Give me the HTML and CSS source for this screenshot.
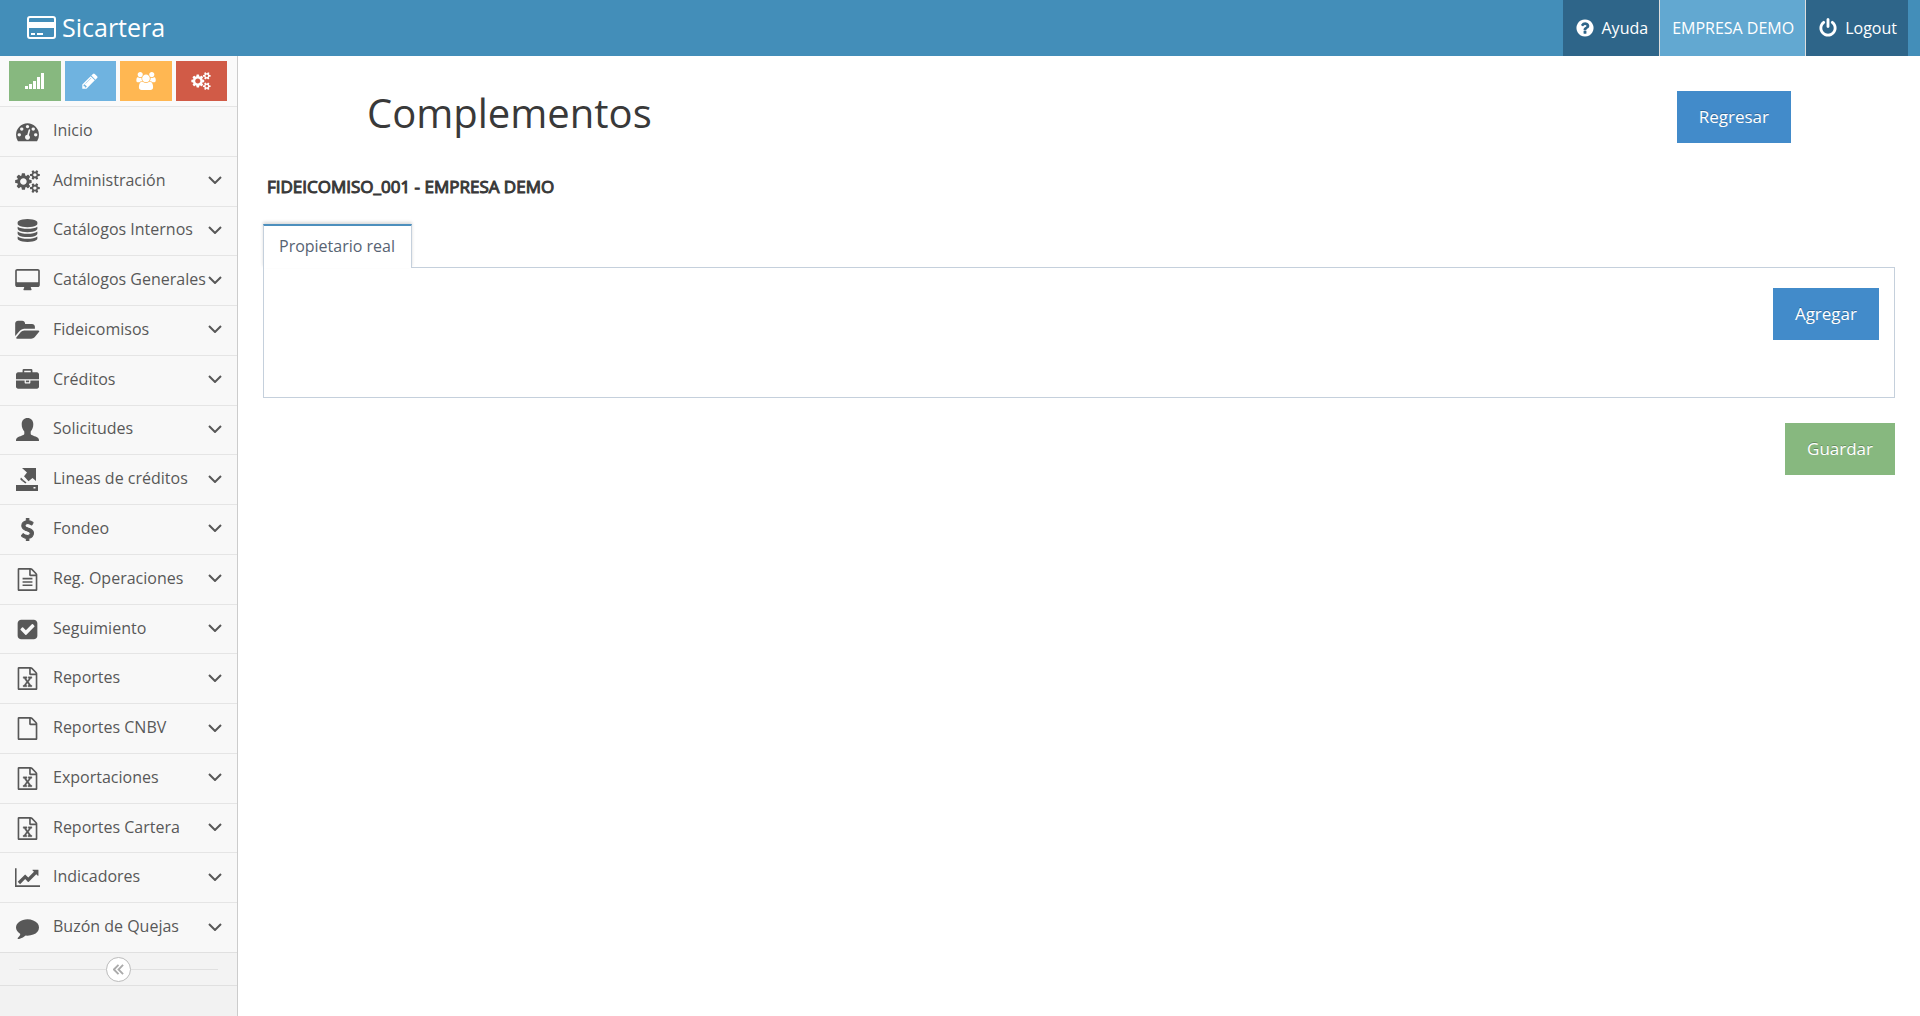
FILE: index.html
```html
<!DOCTYPE html>
<html lang="es">
<head>
<meta charset="utf-8">
<title>Sicartera - Complementos</title>
<link rel="stylesheet" href="styles.css">
</head>
<body>
<svg class="sprite" aria-hidden="true">
  <symbol id="tachometer" viewBox="-64 0 1920 1792"><path transform="translate(0 128)" d="M384 1024q0-53-37.500-90.500t-90.500-37.500-90.500 37.500-37.500 90.500 37.500 90.500 90.500 37.500 90.500-37.500 37.500-90.500zm192-448q0-53-37.500-90.500t-90.500-37.500-90.500 37.500-37.500 90.500 37.500 90.500 90.500 37.500 90.500-37.500 37.500-90.500zm428 481l101-382q6-26-7.500-48.500t-38.500-29.500-48 6.500-30 39.500l-101 382q-60 5-107 43.500t-63 98.500q-20 77 20 146t117 89 146-20 89-117q16-60-6-117t-72-91zm660-33q0-53-37.500-90.500t-90.500-37.500-90.500 37.500-37.500 90.500 37.500 90.500 90.500 37.500 90.500-37.500 37.500-90.500zm-640-640q0-53-37.500-90.500t-90.500-37.500-90.500 37.500-37.500 90.500 37.500 90.500 90.500 37.500 90.500-37.500 37.500-90.500zm448 192q0-53-37.500-90.500t-90.500-37.500-90.500 37.500-37.500 90.500 37.500 90.500 90.500 37.500 90.500-37.500 37.500-90.500zm320 448q0 261-141 483-19 29-54 29h-1402q-35 0-54-29-141-221-141-483 0-182 71-348t191-286 286-191 348-71 348 71 286 191 191 286 71 348z"/></symbol>
  <symbol id="cogs" viewBox="-64 0 1920 1792"><path d="M832 896q0-106-75-181t-181-75-181 75-75 181 75 181 181 75 181-75 75-181zm768 512q0-52-38-90t-90-38-90 38-38 90q0 53 37.500 90.500t90.500 37.500 90.500-37.500 37.500-90.500zm0-1024q0-52-38-90t-90-38-90 38-38 90q0 53 37.500 90.500t90.500 37.500 90.500-37.500 37.500-90.500zm-384 421v185q0 10-7 19.500t-16 10.500l-155 24q-11 35-32 76 34 48 90 115 7 11 7 20 0 12-7 19-23 30-82.500 89.500t-78.500 59.500q-11 0-21-7l-115-90q-37 19-77 31-11 108-23 155-7 24-30 24h-186q-11 0-20-7.500t-10-17.500l-23-153q-34-10-75-31l-118 89q-7 7-20 7-11 0-21-8-144-133-144-160 0-9 7-19 10-14 41-53t47-61q-23-44-35-82l-152-24q-10-1-17-9.500t-7-19.500v-185q0-10 7-19.500t16-10.500l155-24q11-35 32-76-34-48-90-115-7-11-7-20 0-12 7-20 22-30 82-89t79-59q11 0 21 7l115 90q34-18 77-32 11-108 23-154 7-24 30-24h186q11 0 20 7.500t10 17.500l23 153q34 10 75 31l118-89q8-7 20-7 11 0 21 8 144 133 144 160 0 8-7 19-12 16-42 54t-45 60q23 48 34 82l152 23q10 2 17 10.500t7 19.500zm640 533v140q0 16-149 31-12 27-30 52 51 113 51 138 0 4-4 7-122 71-124 71-8 0-46-47t-52-68q-20 2-30 2t-30-2q-14 21-52 68t-46 47q-2 0-124-71-4-3-4-7 0-25 51-138-18-25-30-52-149-15-149-31v-140q0-16 149-31 13-29 30-52-51-113-51-138 0-4 4-7 4-2 35-20t59-34 30-16q8 0 46 46.500t52 67.500q20-2 30-2t30 2q51-71 92-112l6-2q4 0 124 70 4 3 4 7 0 25-51 138 17 23 30 52 149 15 149 31zm0-1024v140q0 16-149 31-12 27-30 52 51 113 51 138 0 4-4 7-122 71-124 71-8 0-46-47t-52-68q-20 2-30 2t-30-2q-14 21-52 68t-46 47q-2 0-124-71-4-3-4-7 0-25 51-138-18-25-30-52-149-15-149-31v-140q0-16 149-31 13-29 30-52-51-113-51-138 0-4 4-7 4-2 35-20t59-34 30-16q8 0 46 46.500t52 67.500q20-2 30-2t30 2q51-71 92-112l6-2q4 0 124 70 4 3 4 7 0 25-51 138 17 23 30 52 149 15 149 31z"/></symbol>
  <symbol id="database" viewBox="-64 0 1920 1792"><path d="M896 768q237 0 443-43t325-127v170q0 69-103 128t-280 93.500-385 34.500-385-34.500-280-93.500-103-128v-170q119 84 325 127t443 43zm0 768q237 0 443-43t325-127v170q0 69-103 128t-280 93.500-385 34.500-385-34.500-280-93.500-103-128v-170q119 84 325 127t443 43zm0-384q237 0 443-43t325-127v170q0 69-103 128t-280 93.500-385 34.500-385-34.500-280-93.500-103-128v-170q119 84 325 127t443 43zm0-1152q208 0 385 34.500t280 93.500 103 128v128q0 69-103 128t-280 93.500-385 34.500-385-34.500-280-93.500-103-128v-128q0-69 103-128t280-93.500 385-34.500z"/></symbol>
  <symbol id="desktop" viewBox="-64 0 1920 1792"><path d="M1728 992v-832q0-13-9.500-22.500t-22.500-9.500h-1600q-13 0-22.500 9.500t-9.500 22.500v832q0 13 9.500 22.500t22.500 9.500h1600q13 0 22.500-9.500t9.500-22.500zm128-832v1088q0 66-47 113t-113 47h-544q0 37 16 77.500t32 71 16 43.500q0 26-19 45t-45 19h-512q-26 0-45-19t-19-45q0-14 16-44t32-70 16-78h-544q-66 0-113-47t-47-113v-1088q0-66 47-113t113-47h1600q66 0 113 47t47 113z"/></symbol>
  <symbol id="folder" viewBox="-64 0 1920 1792"><path d="M1815 952q0 31-31 66l-336 396q-43 51-120.500 86.500t-143.500 35.500h-1088q-34 0-60.500-13t-26.500-43q0-31 31-66l336-396q43-51 120.500-86.500t143.500-35.500h1088q34 0 60.500 13t26.500 43zm-343-344v160h-832q-94 0-197 47.500t-164 119.500l-337 396-5 6q0-4-.5-12.500t-.5-12.500v-960q0-92 66-158t158-66h320q92 0 158 66t66 158v32h544q92 0 158 66t66 158z"/></symbol>
  <symbol id="briefcase" viewBox="-64 0 1920 1792"><path d="M640 256h512v-128h-512v128zm1152 640v480q0 66-47 113t-113 47h-1472q-66 0-113-47t-47-113v-480h672v160q0 26 19 45t45 19h320q26 0 45-19t19-45v-160h672zm-768 0v128h-256v-128h256zm768-480v384h-1792v-384q0-66 47-113t113-47h352v-160q0-40 28-68t68-28h576q40 0 68 28t28 68v160h352q66 0 113 47t47 113z"/></symbol>
  <symbol id="person" viewBox="0 0 25 23"><path d="M12.500 0C9 0 6.700 2.500 6.700 6.200c0 3 1 5.500 2.600 7.300v2.400C9 17.200 4.500 18.100 2.500 19.400 1.200 20.200 1 21.500 1 23h23c0-1.500-.2-2.800-1.500-3.600-2-1.300-6.500-2.200-6.800-3.500v-2.400c1.600-1.800 2.600-4.300 2.600-7.300C18.300 2.500 16 0 12.500 0z"/></symbol>
  <symbol id="export" viewBox="0 0 25 23"><path d="M7 0h14v13l-3.500-3-4 3.300-4.500-5L12 4.500zM6 9.500l2.500 2.500-1 1.500-2.300-2.300zM8.500 12l3 2.500-1.200 1-3-2.500zM1 17h22v6H1zm17.500 2v1.500h2V19z" fill-rule="evenodd"/></symbol>
  <symbol id="dollar" viewBox="-64 0 1920 1792"><path stroke="currentColor" stroke-width="80" d="M1362 1185q0 153-99.500 263.500t-258.500 136.500v175q0 14-9 23t-23 9h-135q-13 0-22.500-9.500t-9.500-22.500v-175q-66-9-127.500-31t-101.500-44.500-74-48-46.500-37.500-17.500-18q-17-21-2-41l103-135q7-10 23-12 15-2 24 9l2 2q113 99 243 125 37 8 74 8 81 0 142.500-43t61.500-122q0-28-15-53t-33.500-42-58.500-37.500-66-32-80-32.500q-39-16-61.500-25t-61.500-26.500-62.500-31-56.500-35.500-53.500-42.500-43.500-49-35.500-58-21-66.500-8.500-78q0-138 98-242t255-134v-180q0-13 9.500-22.500t22.500-9.500h135q14 0 23 9t9 23v176q57 6 110.500 23t87 33.500 63.500 37.500 39 29 15 14q17 18 5 38l-81 146q-8 15-23 16-14 3-27-7-3-3-14.500-12t-39-26.500-58.500-32-74.500-26-85.500-11.500q-95 0-155 43t-60 111q0 26 8.500 48t29.500 41.500 39.500 33 56 31 60.500 27 70 27.500q53 20 81 31.500t76 35 75.500 42.500 62 50 53 63.500 31.500 76.500 13 94z"/></symbol>
  <symbol id="file" viewBox="-64 0 1920 1792"><path d="M1596 380q28 28 48 76t20 88v1152q0 40-28 68t-68 28h-1344q-40 0-68-28t-28-68v-1600q0-40 28-68t68-28h896q40 0 88 20t76 48zm-444-244v376h376q-10-29-22-41l-313-313q-12-12-41-22zm384 1528v-1024h-416q-40 0-68-28t-28-68v-416h-768v1536h1280z"/></symbol>
  <symbol id="file-text" viewBox="-64 0 1920 1792"><use href="#file" x="-64" width="1920" height="1792"/><path d="M512 768h768v128H512zM512 1024h768v128H512zM512 1280h768v128H512z"/></symbol>
  <symbol id="file-excel" viewBox="-64 0 1920 1792"><use href="#file" x="-64" width="1920" height="1792"/><path stroke="currentColor" stroke-width="30" d="M557 1430v106h281v-106h-75l103-161q5-7 10-16.500t7.500-13.500 3.500-4h2q1 4 5 10 2 4 4.500 7.500t6 8 6.500 8.500l107 161h-76v106h291v-106h-68l-192-273 195-282h67v-107h-279v107h74l-103 159q-4 7-10 16.500t-9 13.500l-2 3h-2q-1-4-5-10-6-11-17-23l-106-159h76v-107h-290v107h68l189 272-194 283h-68z"/></symbol>
  <symbol id="check" viewBox="-64 0 1920 1792"><path d="M813 1299l614-614q19-19 19-45t-19-45l-102-102q-19-19-45-19t-45 19l-467 467-211-211q-19-19-45-19t-45 19l-102 102q-19 19-19 45t19 45l358 358q19 19 45 19t45-19zm851-883v960q0 119-84.500 203.500t-203.500 84.500h-960q-119 0-203.500-84.500t-84.500-203.500v-960q0-119 84.500-203.500t203.500-84.500h960q119 0 203.500 84.500t84.500 203.500z"/></symbol>
  <symbol id="chart" viewBox="0 0 2048 1792"><path d="M2048 1536v128h-2048v-1536h128v1408h1920zm-128-1248v435q0 21-19.500 29.500t-35.500-7.500l-121-121-633 633q-10 10-23 10t-23-10l-233-233-416 416-192-192 585-585q10-10 23-10t23 10l233 233 464-464-121-121q-16-16-7.500-35.500t29.500-19.500h435q14 0 23 9t9 23z"/></symbol>
  <symbol id="comment" viewBox="-64 0 1920 1792"><path d="M1792 896q0 174-120 321.500t-326 233-450 85.500q-70 0-145-8-198 175-460 242-49 14-114 22-17 2-30.500-9t-17.500-29v-1q-3-4-.5-12t2-10 4.500-9.500l6-9 7-8.500 8-9q7-8 31-34.500t34.500-38 31-39.500 32.500-51 27-59 26-76q-157-89-247.500-220t-90.500-281q0-130 71-248.500t191-204.500 286-136.500 348-50.500q244 0 450 85.500t326 233 120 321.500z"/></symbol>
  <symbol id="power" viewBox="0 0 1792 1792"><path d="M1664 896q0 156-61 298t-164 245-245 164-298 61-298-61-245-164-164-245-61-298q0-182 80.500-343t226.500-270q43-32 95.500-25t83.500 50q32 42 24.500 94.500t-49.500 84.500q-98 74-151.500 181t-53.500 228q0 104 40.500 198.500t109.500 163.500 163.500 109.500 198.500 40.500 198.500-40.500 163.500-109.500 109.500-163.500 40.500-198.500q0-121-53.500-228t-151.500-181q-42-32-49.500-84.500t24.500-94.500q31-43 84-50t95 25q146 109 226.500 270t80.500 343zm-640-768v640q0 52-38 90t-90 38-90-38-38-90v-640q0-52 38-90t90-38 90 38 38 90z"/></symbol>
  <symbol id="question" viewBox="0 0 1792 1792"><path d="M1024 1376v-192q0-14-9-23t-23-9h-192q-14 0-23 9t-9 23v192q0 14 9 23t23 9h192q14 0 23-9t9-23zm256-672q0-88-55.500-163t-138.500-116-170-41q-243 0-371 213-15 24 8 42l132 100q7 6 19 6 16 0 25-12 53-68 86-92 34-24 86-24 48 0 85.500 26t37.500 59q0 38-20 61t-68 45q-63 28-115.500 86.500t-52.500 125.500v36q0 14 9 23t23 9h192q14 0 23-9t9-23q0-19 21.500-49.500t54.500-49.500q32-18 49-28.500t46-35 44.500-48 28-60.500 12.500-81zm384 192q0 209-103 385.500t-279.500 279.500-385.500 103-385.500-103-279.500-279.500-103-385.500 103-385.500 279.500-279.500 385.500-103 385.500 103 279.500 279.500 103 385.500z"/></symbol>
  <symbol id="pencil" viewBox="0 0 1792 1792"><path d="M491 1536l91-91-235-235-91 91v107h128v128h107zm523-928q0-22-22-22-10 0-17 7l-542 542q-7 7-7 17 0 22 22 22 10 0 17-7l542-542q7-7 7-17zm-54-192l416 416-832 832h-416v-416zm683 96q0 53-37 90l-166 166-416-416 166-165q36-38 90-38 53 0 91 38l235 234q37 39 37 91z"/></symbol>
  <symbol id="users" viewBox="-64 0 1920 1792"><path d="M529 896q-162 5-265 128h-134q-82 0-138-40.500t-56-118.500q0-353 124-353 6 0 43.500 21t97.500 42.500 119 21.500q67 0 133-23-5 37-5 66 0 159 93 256zm1071 637q0 120-73 189.500t-194 69.500h-874q-121 0-194-69.500t-73-189.500q0-53 3.500-103.500t14-109 26.500-108.500 43-97.500 62-81 85.500-53.500 111.500-20q10 0 43 21.500t73 48 107 48 135 21.500 135-21.500 107-48 73-48 43-21.500q61 0 111.500 20t85.500 53.500 62 81 43 97.500 26.500 108.500 14 109 3.500 103.500zm-1024-1277q0 106-75 181t-181 75-181-75-75-181 75-181 181-75 181 75 75 181zm704 384q0 159-112.500 271.500t-271.500 112.500-271.500-112.500-112.500-271.500 112.500-271.500 271.500-112.500 271.500 112.500 112.500 271.500zm576 225q0 78-56 118.500t-138 40.500h-134q-103-123-265-128 93-97 93-256 0-29-5-66 66 23 133 23 59 0 119-21.500t97.500-42.500 43.500-21q124 0 124 353zm-128-609q0 106-75 181t-181 75-181-75-75-181 75-181 181-75 181 75 75 181z"/></symbol>
  <symbol id="signal" viewBox="0 0 20 18"><path d="M0 14h3v3H0zM4 12h3v5H4zM8 9h3v8H8zM12 5h3v12h-3zM16 1h3v16h-3z"/></symbol>
  <symbol id="card" viewBox="0 0 29 23"><path fill-rule="evenodd" d="M3 0h23a3 3 0 0 1 3 3v17a3 3 0 0 1-3 3H3a3 3 0 0 1-3-3V3a3 3 0 0 1 3-3zm0 2a1 1 0 0 0-1 1v3h25V3a1 1 0 0 0-1-1zM2 12v8a1 1 0 0 0 1 1h23a1 1 0 0 0 1-1v-8zm2 5h4v2H4zm6 0h6v2h-6z"/></symbol>
  <symbol id="down" viewBox="0 0 14 8"><path d="M1 1l6 6 6-6" fill="none" stroke="currentColor" stroke-width="2"/></symbol>
  <symbol id="double-left" viewBox="0 0 12 12"><path d="M6 1L1 6l5 5M11 1L6 6l5 5" fill="none" stroke="currentColor" stroke-width="2"/></symbol>
</svg>

<header class="navbar">
  <a class="brand" href="#"><svg class="brand-icon"><use href="#card"/></svg>Sicartera</a>
  <nav class="navbar-links">
    <a class="nav-link" href="#"><svg class="nav-icon"><use href="#question"/></svg>Ayuda</a>
    <a class="nav-link company" href="#">EMPRESA DEMO</a>
    <a class="nav-link" href="#"><svg class="nav-icon"><use href="#power"/></svg>Logout</a>
  </nav>
</header>

<div class="layout">
  <aside class="sidebar">
    <div class="shortcuts">
      <button class="shortcut green" aria-label="Estadísticas"><svg><use href="#signal"/></svg></button>
      <button class="shortcut blue" aria-label="Editar"><svg><use href="#pencil"/></svg></button>
      <button class="shortcut orange" aria-label="Usuarios"><svg><use href="#users"/></svg></button>
      <button class="shortcut red" aria-label="Ajustes"><svg><use href="#cogs"/></svg></button>
    </div>
    <ul class="menu">
      <li><a href="#"><svg class="icon"><use href="#tachometer"/></svg><span>Inicio</span></a></li>
      <li><a href="#"><svg class="icon"><use href="#cogs"/></svg><span>Administración</span><svg class="arrow"><use href="#down"/></svg></a></li>
      <li><a href="#"><svg class="icon"><use href="#database"/></svg><span>Catálogos Internos</span><svg class="arrow"><use href="#down"/></svg></a></li>
      <li><a href="#"><svg class="icon"><use href="#desktop"/></svg><span>Catálogos Generales</span><svg class="arrow"><use href="#down"/></svg></a></li>
      <li><a href="#"><svg class="icon"><use href="#folder"/></svg><span>Fideicomisos</span><svg class="arrow"><use href="#down"/></svg></a></li>
      <li><a href="#"><svg class="icon"><use href="#briefcase"/></svg><span>Créditos</span><svg class="arrow"><use href="#down"/></svg></a></li>
      <li><a href="#"><svg class="icon"><use href="#person"/></svg><span>Solicitudes</span><svg class="arrow"><use href="#down"/></svg></a></li>
      <li><a href="#"><svg class="icon"><use href="#export"/></svg><span>Lineas de créditos</span><svg class="arrow"><use href="#down"/></svg></a></li>
      <li><a href="#"><svg class="icon"><use href="#dollar"/></svg><span>Fondeo</span><svg class="arrow"><use href="#down"/></svg></a></li>
      <li><a href="#"><svg class="icon"><use href="#file-text"/></svg><span>Reg. Operaciones</span><svg class="arrow"><use href="#down"/></svg></a></li>
      <li><a href="#"><svg class="icon"><use href="#check"/></svg><span>Seguimiento</span><svg class="arrow"><use href="#down"/></svg></a></li>
      <li><a href="#"><svg class="icon"><use href="#file-excel"/></svg><span>Reportes</span><svg class="arrow"><use href="#down"/></svg></a></li>
      <li><a href="#"><svg class="icon"><use href="#file"/></svg><span>Reportes CNBV</span><svg class="arrow"><use href="#down"/></svg></a></li>
      <li><a href="#"><svg class="icon"><use href="#file-excel"/></svg><span>Exportaciones</span><svg class="arrow"><use href="#down"/></svg></a></li>
      <li><a href="#"><svg class="icon"><use href="#file-excel"/></svg><span>Reportes Cartera</span><svg class="arrow"><use href="#down"/></svg></a></li>
      <li><a href="#"><svg class="icon"><use href="#chart"/></svg><span>Indicadores</span><svg class="arrow"><use href="#down"/></svg></a></li>
      <li><a href="#"><svg class="icon"><use href="#comment"/></svg><span>Buzón de Quejas</span><svg class="arrow"><use href="#down"/></svg></a></li>
    </ul>
    <div class="collapse">
      <button class="collapse-button" aria-label="Contraer menú"><svg><use href="#double-left"/></svg></button>
    </div>
  </aside>

  <main class="content">
    <div class="page-head">
      <h1>Complementos</h1>
      <button class="btn primary">Regresar</button>
    </div>
    <p class="trust">FIDEICOMISO_001 - EMPRESA DEMO</p>
    <div class="tabs" role="tablist">
      <button class="tab" role="tab" aria-selected="true">Propietario real</button>
    </div>
    <section class="panel" role="tabpanel">
      <button class="btn primary">Agregar</button>
    </section>
    <div class="actions">
      <button class="btn success">Guardar</button>
    </div>
  </main>
</div>
</body>
</html>
```
FILE: styles.css
```css
* {
  box-sizing: border-box;
}

body {
  display: flex;
  flex-direction: column;
  min-height: 100vh;
  margin: 0;
  background: #fff;
  color: #393939;
  font: 16px/24px "Open Sans", sans-serif;
}

svg {
  fill: currentColor;
  flex: none;
}

.sprite {
  position: absolute;
  width: 0;
  height: 0;
}

a {
  color: inherit;
  text-decoration: none;
}

button {
  border: 0;
  font: inherit;
  cursor: pointer;
}

/* Top bar */
.navbar {
  display: flex;
  justify-content: space-between;
  height: 56px;
  padding: 0 12px 0 27px;
  background: #438eb9;
  color: #fff;
}

.brand {
  display: flex;
  align-items: center;
  gap: 6px;
  padding-bottom: 2px;
  font-size: 25px;
}

.brand-icon {
  width: 29px;
  height: 23px;
}

.navbar-links {
  display: flex;
}

.nav-link {
  display: flex;
  align-items: center;
  gap: 7px;
  padding: 0 11px 0 12px;
  background: #2e6589;
}

.nav-link + .nav-link {
  border-left: 1px solid #ddd;
}

.company {
  background: #62a8d1;
}

.nav-icon {
  width: 20px;
  height: 20px;
}

/* Sidebar */
.layout {
  display: flex;
  flex: 1;
}

.sidebar {
  flex: none;
  width: 238px;
  border-right: 1px solid #ccc;
  background: #f2f2f2;
}

.shortcuts {
  display: grid;
  grid-template-columns: repeat(4, 1fr);
  gap: 4px;
  padding: 5px 10px 5px 9px;
  background: #fafafa;
}

.shortcut {
  display: flex;
  align-items: center;
  justify-content: center;
  height: 40px;
  padding: 0;
  color: #fff;
}

.shortcut svg {
  width: 20px;
  height: 18px;
}

.green { background: #87b87f; }
.blue { background: #6fb3e0; }
.orange { background: #ffb752; }
.red { background: #d15b47; }

.menu {
  display: grid;
  grid-auto-rows: 1fr;
  min-height: 847px;
  margin: 0;
  padding: 0;
  border-bottom: 1px solid #e0e0e0;
  list-style: none;
}

.menu li {
  border-top: 1px solid #e5e5e5;
  background: #f8f8f8;
}

.menu a {
  display: flex;
  align-items: center;
  height: 100%;
  padding: 0 15px;
  color: #585858;
}

.menu span {
  flex: 1;
  padding: 0 0 3px 13px;
  white-space: nowrap;
}

.icon {
  width: 25px;
  height: 23px;
}

.arrow {
  width: 14px;
  height: 8px;
  margin-bottom: 2px;
}

.collapse {
  display: flex;
  align-items: center;
  height: 33px;
  padding: 0 19px;
  border-bottom: 1px solid #e0e0e0;
  background: #f3f3f3;
}

.collapse::before,
.collapse::after {
  flex: 1;
  height: 1px;
  background: #e0e0e0;
  content: "";
}

.collapse-button {
  display: flex;
  align-items: center;
  justify-content: center;
  width: 25px;
  height: 25px;
  padding: 0;
  border: 1px solid #bbb;
  border-radius: 50%;
  background: #fff;
  color: #aaa;
}

.collapse-button svg {
  width: 11px;
  height: 11px;
}

/* Page */
.content {
  flex: 1;
  min-width: 0;
  padding: 35px 25px;
}

.page-head {
  display: flex;
  justify-content: space-between;
  padding: 0 104px;
}

h1 {
  margin: 0;
  font-size: 40px;
  font-weight: 400;
  line-height: 44px;
}

.btn {
  height: 52px;
  padding: 0 22px 1px;
  color: #fff;
  font-size: 17px;
  text-shadow: 0 -1px 0 rgba(0, 0, 0, 0.25);
}

.primary { background: #428bca; }
.success { background: #87b87f; }

.trust {
  margin: 32px 4px 25px;
  font-size: 17px;
  -webkit-text-stroke: 1px;
}

.tabs {
  display: flex;
}

.tab {
  z-index: 1;
  height: 44px;
  margin-bottom: -1px;
  padding: 0 16px 2px 15px;
  border: 1px solid #c5d0dc;
  border-top: 2px solid #4c8fbd;
  border-bottom: 0;
  background: #fff;
  box-shadow: 0 -2px 3px rgba(0, 0, 0, 0.15);
  color: #576373;
}

.panel {
  display: flex;
  justify-content: flex-end;
  min-height: 131px;
  padding: 20px 15px;
  border: 1px solid #c5d0dc;
}

.actions {
  display: flex;
  justify-content: flex-end;
  padding-top: 25px;
}
```
